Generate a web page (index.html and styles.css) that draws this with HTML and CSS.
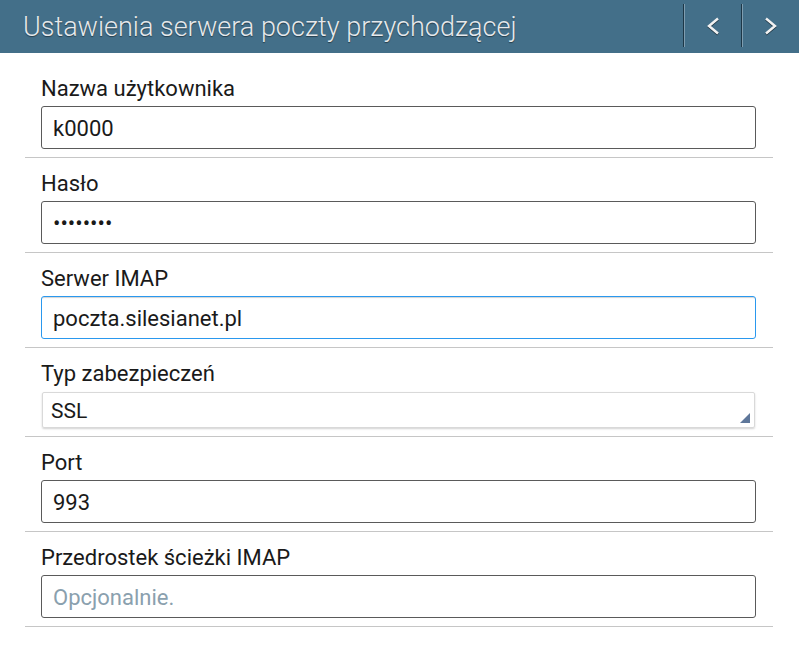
FILE: index.html
```html
<!DOCTYPE html>
<html lang="pl">

<head>
    <meta charset="UTF-8">
    <meta name="viewport" content="width=device-width, initial-scale=1.0">
    <title>Ustawienia serwera poczty przychodzącej</title>
    <link rel="stylesheet" href="styles.css">
</head>

<body>
    <header class="action-bar">
        <h1 class="title">Ustawienia serwera poczty przychodzącej</h1>
        <div class="nav-buttons">
            <button class="nav-btn" aria-label="Wstecz">
                <svg width="16" height="18" viewBox="0 0 16 18">
                    <path d="M13 1.5 L4 9 L13 16.5" fill="none" stroke="#f2f2f2" stroke-width="2.4" />
                </svg>
            </button>
            <button class="nav-btn" aria-label="Dalej">
                <svg width="16" height="18" viewBox="0 0 16 18">
                    <path d="M3 1.5 L12 9 L3 16.5" fill="none" stroke="#f2f2f2" stroke-width="2.4" />
                </svg>
            </button>
        </div>
    </header>

    <main class="form">
        <div class="row">
            <label class="row-label" for="user">Nazwa użytkownika</label>
            <input class="field" id="user" type="text" value="k0000">
        </div>
        <div class="row">
            <label class="row-label" for="pass">Hasło</label>
            <input class="field" id="pass" type="password" value="12345678">
        </div>
        <div class="row">
            <label class="row-label" for="server">Serwer IMAP</label>
            <input class="field field-focused" id="server" type="text" value="poczta.silesianet.pl">
        </div>
        <div class="row row-select">
            <span class="row-label">Typ zabezpieczeń</span>
            <div class="spinner">SSL</div>
        </div>
        <div class="row">
            <label class="row-label" for="port">Port</label>
            <input class="field" id="port" type="text" value="993">
        </div>
        <div class="row">
            <label class="row-label" for="prefix">Przedrostek ścieżki IMAP</label>
            <input class="field" id="prefix" type="text" placeholder="Opcjonalnie.">
        </div>
    </main>
</body>

</html>
```

FILE: styles.css
```css
* {
    margin: 0;
    padding: 0;
    box-sizing: border-box;
}

body {
    font-family: Roboto, "Noto Sans", sans-serif;
    background: #fff;
    color: #1a1a1a;
    width: 799px;
    height: 645px;
    overflow: hidden;
}

.action-bar {
    height: 53px;
    background: #436f89;
    display: flex;
    align-items: center;
    justify-content: space-between;
    padding-left: 23px;
}

.title {
    font-size: 27px;
    font-weight: 300;
    color: #e6e9ec;
    text-shadow: 0 1px 1px rgba(0, 0, 0, 0.45);
    white-space: nowrap;
}

.nav-buttons {
    display: flex;
    height: 100%;
    padding: 4px 0 6px;
}

.nav-btn {
    width: 58px;
    height: 100%;
    background: none;
    border: none;
    border-left: 1px solid #1d3747;
    box-shadow: inset 1px 0 0 #7f9db0;
    display: flex;
    align-items: center;
    justify-content: center;
    cursor: pointer;
}

.nav-btn svg {
    filter: drop-shadow(0 1px 0 rgba(0, 0, 0, 0.5));
}

.form {
    padding: 10px 26px 0 25px;
}

.row {
    padding: 13px 17px 8px 16px;
    border-bottom: 1px solid #c6c6c6;
    display: flex;
    flex-direction: column;
}

.row-label {
    font-size: 22px;
    line-height: 25px;
    color: #1a1a1a;
    margin-bottom: 5px;
}

.field {
    height: 43px;
    width: 100%;
    border: 1px solid #5a5a5a;
    border-radius: 3px;
    padding: 2px 11px 0;
    font-family: Roboto, "Noto Sans", sans-serif;
    font-size: 22px;
    color: #1a1a1a;
    background: #fff;
    outline: none;
}

.field::placeholder {
    color: #8aa0ae;
}

.field-focused {
    border: 1px solid #2a98ee;
    box-shadow: inset 0 2px 1px -1px #d4d4d4;
}

.row-select {
    padding-bottom: 8px;
}

.spinner {
    position: relative;
    height: 36px;
    margin: 1px 1px 0 1px;
    border: 1px solid #d9d9d9;
    border-radius: 2px;
    box-shadow: 0 1px 2px rgba(0, 0, 0, 0.18);
    padding: 1px 0 0 8px;
    font-size: 21px;
    line-height: 34px;
    color: #1a1a1a;
}

.spinner::after {
    content: "";
    position: absolute;
    right: 4px;
    bottom: 4px;
    width: 0;
    height: 0;
    border-left: 10px solid transparent;
    border-bottom: 10px solid #5e779a;
}
```
